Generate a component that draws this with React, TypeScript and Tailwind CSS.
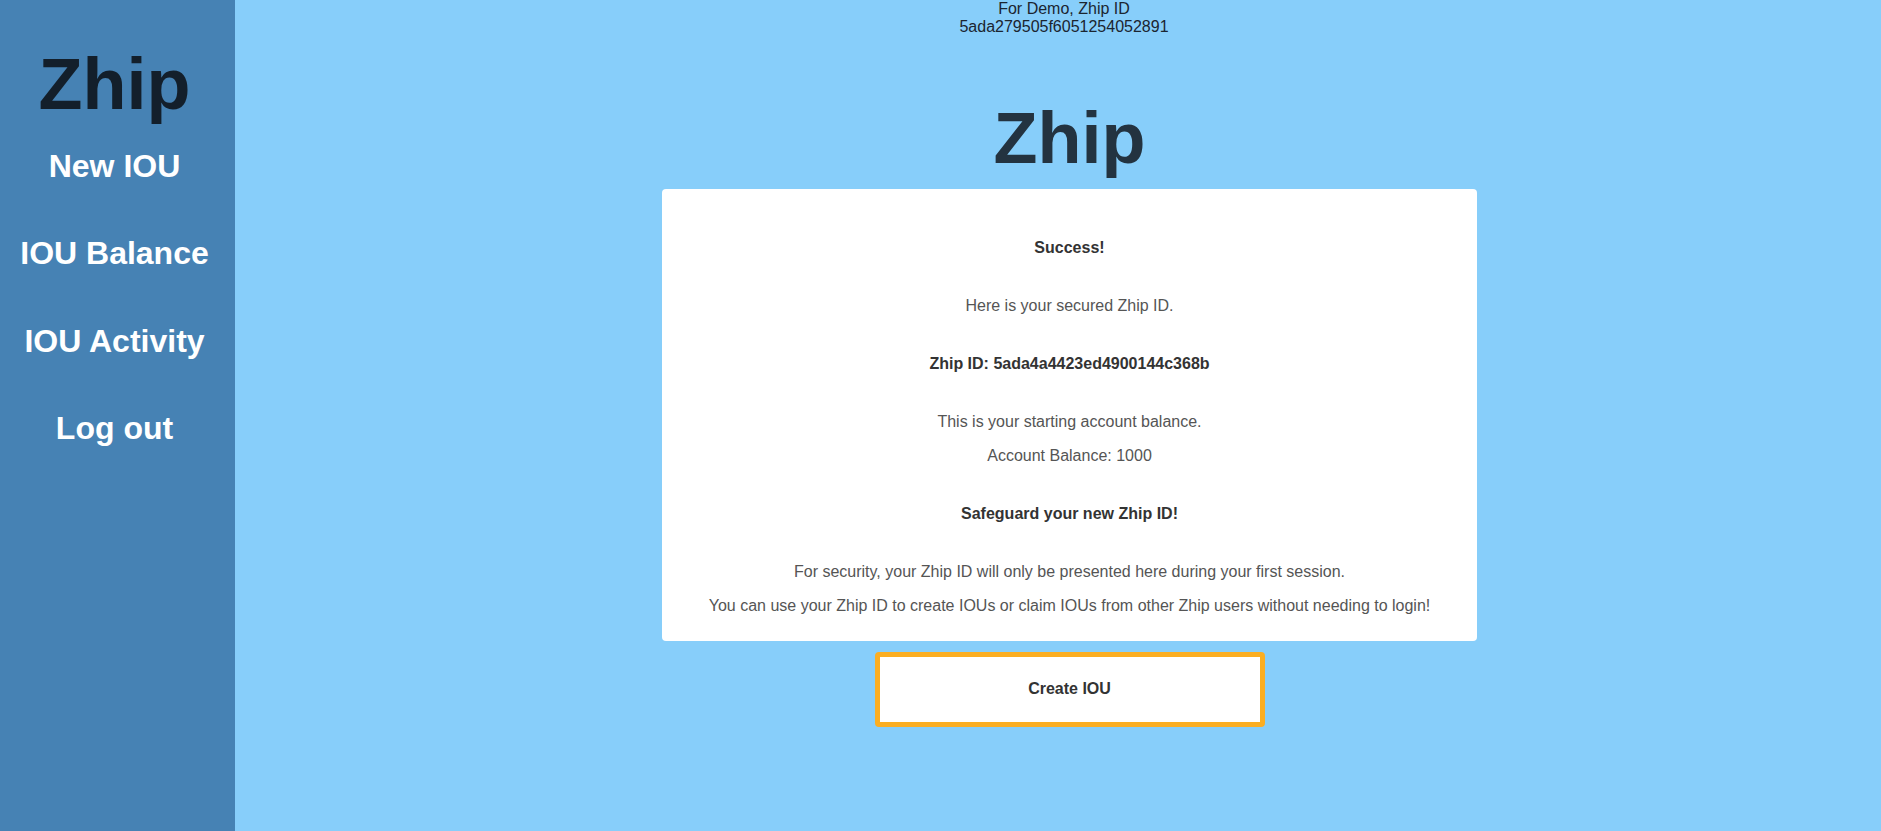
const navItems = ['New IOU', 'IOU Balance', 'IOU Activity', 'Log out'];

const demoId = '5ada279505f6051254052891';
const zhipId = '5ada4a4423ed4900144c368b';

const Sidebar: React.FC = () => {
    return (
        <aside className="w-[235px] shrink-0 bg-[#4682b4] pr-[6px] text-center">
            <h1 className="mt-[43px] text-[72px] font-bold leading-[83px] text-[#131f2b]">Zhip</h1>
            <nav className="mt-[22px] flex flex-col gap-[50.5px]">
                {navItems.map((item) => (
                    <a key={item} href="#" className="block text-[32px] font-bold leading-[36.8px] text-white">
                        {item}
                    </a>
                ))}
            </nav>
        </aside>
    );
};

const App: React.FC = () => {
    return (
        <div className="flex min-h-screen font-['Liberation_Sans',Arial,sans-serif]">
            <Sidebar />
            <main className="flex flex-1 flex-col items-center bg-[#87cefa] pl-[23px]">
                <div className="mr-[11px] text-center text-base leading-[18.4px] text-[#1b2530]">
                    <div>For Demo, Zhip ID</div>
                    <div>{demoId}</div>
                </div>

                <h1 className="mt-[60px] text-[72px] font-bold leading-[83px] text-[#233340]">Zhip</h1>

                <div className="mt-[9px] w-[815px] rounded bg-white pt-[42px] pb-[18px] text-center text-base leading-[34px] text-[#555]">
                    <p className="font-bold text-[#333]">Success!</p>
                    <p className="mt-6">Here is your secured Zhip ID.</p>
                    <p className="mt-6 font-bold text-[#333]">Zhip ID: {zhipId}</p>
                    <p className="mt-6">This is your starting account balance.</p>
                    <p>Account Balance: 1000</p>
                    <p className="mt-6 font-bold text-[#333]">Safeguard your new Zhip ID!</p>
                    <p className="mt-6">For security, your Zhip ID will only be presented here during your first session.</p>
                    <p>You can use your Zhip ID to create IOUs or claim IOUs from other Zhip users without needing to login!</p>
                </div>

                <button
                    type="button"
                    className="mt-[11px] h-[75px] w-[390px] rounded border-[5px] border-[#fbae22] bg-white text-base font-bold text-[#333]"
                >
                    Create IOU
                </button>
            </main>
        </div>
    );
};

export default App;
